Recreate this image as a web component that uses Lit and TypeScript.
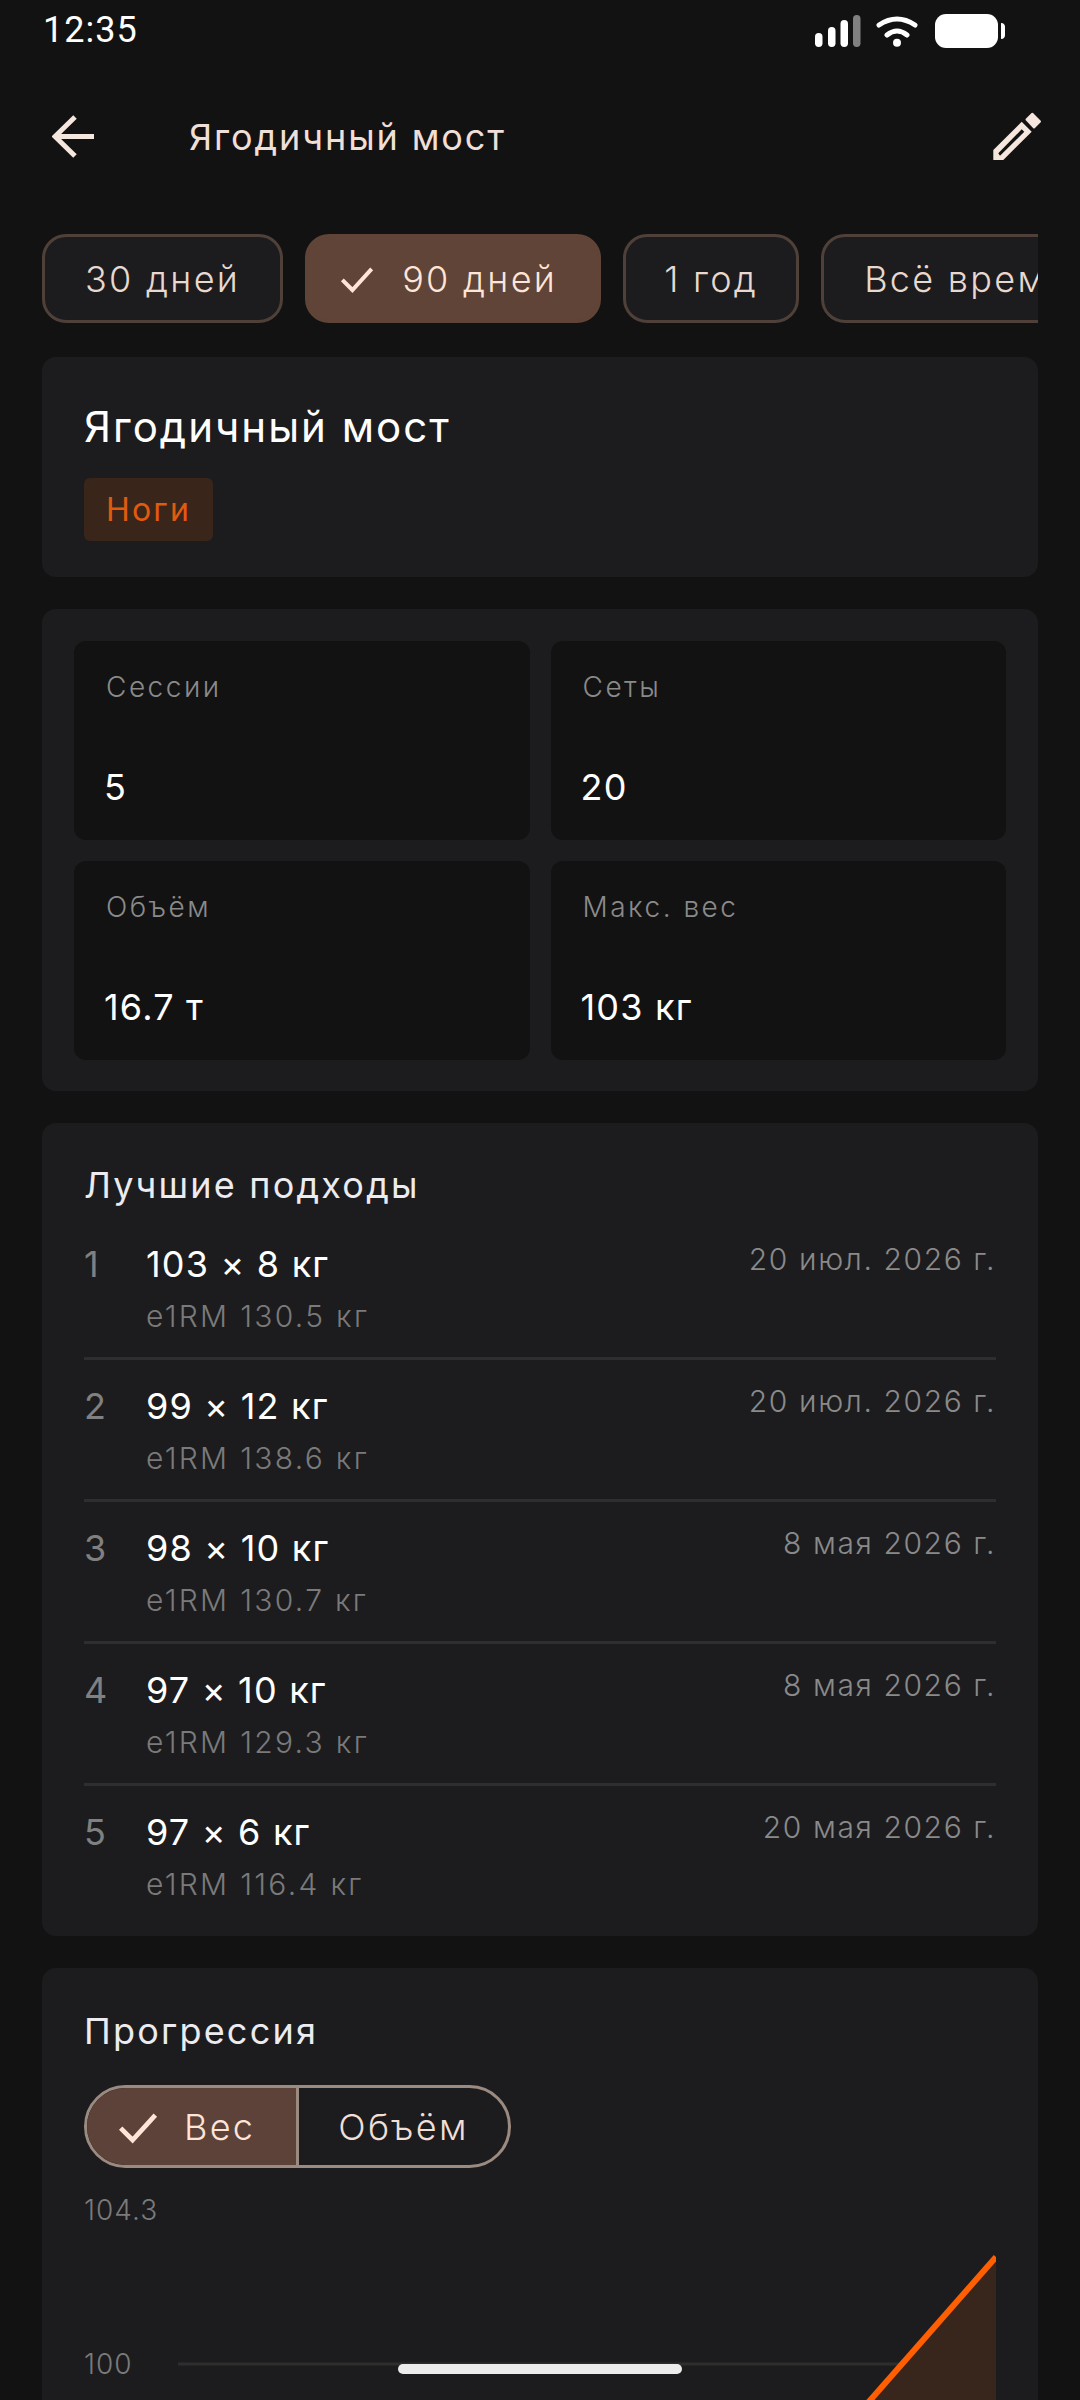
import { LitElement, css, html, svg } from 'lit';
import { customElement } from 'lit/decorators.js';

const checkIcon = (size: number) => html`<svg class="check" width=${size} height=${size} viewBox="0 0 24 24">
  <path d="M4 12.5l5.500 5.500L20 6.500" fill="none" stroke="currentColor" stroke-width="2.200" />
</svg>`;

interface Stat {
  label: string;
  value: string;
}

interface BestSet {
  main: string;
  e1rm: string;
  date: string;
}

const stats: Stat[] = [
  { label: 'Сессии', value: '5' },
  { label: 'Сеты', value: '20' },
  { label: 'Объём', value: '16.7 т' },
  { label: 'Макс. вес', value: '103 кг' },
];

const bestSets: BestSet[] = [
  { main: '103 × 8 кг', e1rm: 'e1RM 130.5 кг', date: '20 июл. 2026 г.' },
  { main: '99 × 12 кг', e1rm: 'e1RM 138.6 кг', date: '20 июл. 2026 г.' },
  { main: '98 × 10 кг', e1rm: 'e1RM 130.7 кг', date: '8 мая 2026 г.' },
  { main: '97 × 10 кг', e1rm: 'e1RM 129.3 кг', date: '8 мая 2026 г.' },
  { main: '97 × 6 кг', e1rm: 'e1RM 116.4 кг', date: '20 мая 2026 г.' },
];

@customElement('app-root')
export class AppRoot extends LitElement {
  private renderStatusBar() {
    return html`<div class="status">
      <span class="time">12:35</span>
      <svg width="190" height="34" viewBox="0 0 190 34">
        <rect x="0" y="19" width="7.500" height="14" rx="3.700" fill="#fff" />
        <rect x="13" y="13" width="7.500" height="20" rx="3.700" fill="#fff" />
        <rect x="25.500" y="6" width="7.500" height="27" rx="3.700" fill="#fff" />
        <rect x="38" y="1" width="7.500" height="32" rx="3.700" fill="#808080" />
        <path d="M64 11Q82-1 100 11M72 21Q82 13 92 21" fill="none" stroke="#fff" stroke-width="5" stroke-linecap="round" />
        <circle cx="82" cy="28.700" r="4" fill="#fff" />
        <rect x="120" y="0" width="63" height="34" rx="11" fill="#fff" />
        <path d="M186 9c3 0 4 2 4 4v8c0 2-1 4-4 4z" fill="#fff" />
      </svg>
    </div>`;
  }

  private renderHeader() {
    return html`<div class="header">
      <svg width="44" height="44" viewBox="0 0 44 44">
        <path d="M42 21.500H4M23 2L3 21.500 23 41" fill="none" stroke="#f5e6de" stroke-width="5" />
      </svg>
      <span class="header-title">Ягодичный мост</span>
      <svg width="50" height="50" viewBox="0 0 50 50">
        <path fill-rule="evenodd" d="M1.300 38L29.700 9.700 39.700 19.700 11.300 48H1.300zM6.300 41.300L8 43.700 32.300 19.700 29.700 17.300z" fill="#f5e6de" />
        <path d="M34.500 7.500L40.300 1.700 48 9.500 42 15.500z" fill="#f5e6de" stroke="#f5e6de" stroke-width="2" stroke-linejoin="round" />
      </svg>
    </div>`;
  }

  private renderChips() {
    return html`<div class="chips">
      <div class="chip">30 дней</div>
      <div class="chip on">${checkIcon(44)}<span>90 дней</span></div>
      <div class="chip narrow">1 год</div>
      <div class="chip">Всё время</div>
    </div>`;
  }

  private renderChart() {
    return html`<svg class="chart" width="912" height="215" viewBox="0 0 912 215">
      ${svg`<line x1="94" y1="174" x2="912" y2="174" stroke="#2e2e2e" stroke-width="3" />
      <text class="axis" x="0" y="30">104.3</text>
      <text class="axis" x="0" y="184">100</text>
      <path d="M912 67L782 215H912z" fill="#38251c" />
      <path d="M912 67L782 215" fill="none" stroke="#ff5f00" stroke-width="6" />`}
    </svg>`;
  }

  protected render() {
    return html`<div class="page">
      ${this.renderStatusBar()}
      ${this.renderHeader()}
      ${this.renderChips()}
      <div class="content">
        <section class="card info">
          <h1>Ягодичный мост</h1>
          <span class="badge">Ноги</span>
        </section>
        <section class="card stats">
          ${stats.map(
            (s) => html`<div class="stat">
              <div class="stat-label">${s.label}</div>
              <div class="stat-value">${s.value}</div>
            </div>`,
          )}
        </section>
        <section class="card best">
          <h2>Лучшие подходы</h2>
          ${bestSets.map(
            (b, i) => html`<div class="row">
              <span class="num">${i + 1}</span>
              <div class="grow">
                <div class="main">${b.main}</div>
                <div class="sub">${b.e1rm}</div>
              </div>
              <span class="date">${b.date}</span>
            </div>`,
          )}
        </section>
        <section class="card progress">
          <h2>Прогрессия</h2>
          <div class="toggle">
            <div class="seg on">${checkIcon(52)}<span>Вес</span></div>
            <div class="seg">Объём</div>
          </div>
          ${this.renderChart()}
        </section>
      </div>
      <div class="home"></div>
    </div>`;
  }

  static styles = css`
    :host {
      display: block;
      font-family: Inter, 'Noto Sans', sans-serif;
      color: #fff;
    }

    .page {
      position: relative;
      box-sizing: border-box;
      width: 1080px;
      height: 2400px;
      overflow: hidden;
      background: #121212;
    }

    .status {
      display: flex;
      align-items: center;
      height: 60px;
      padding: 0 75px 0 43px;
    }

    .status svg {
      margin-top: 2px;
    }

    .time {
      flex: 1;
      font-family: Roboto, sans-serif;
      font-size: 36px;
      letter-spacing: 1px;
    }

    .header {
      display: flex;
      align-items: center;
      height: 150px;
      margin-top: 2px;
      padding: 0 38px 0 52px;
    }

    .header-title {
      flex: 1;
      margin-left: 93px;
      font-size: 36px;
      letter-spacing: 1.9px;
      color: #f0dfd6;
    }

    .chips {
      display: flex;
      gap: 22px;
      margin: 22px 42px 0;
      height: 89px;
      overflow: hidden;
    }

    .chip {
      box-sizing: border-box;
      display: flex;
      flex: none;
      align-items: center;
      height: 89px;
      padding: 0 40px;
      border: 3px solid #4f4039;
      border-radius: 24px;
      background: #1c1c1e;
      color: #e8d8ce;
      font-size: 36px;
      font-weight: 300;
      letter-spacing: 2.300px;
      white-space: nowrap;
    }

    .chip.narrow {
      padding: 0 38px;
    }

    .chip.on {
      gap: 23px;
      padding: 0 41px 0 27px;
      background: #604437;
      border-color: #604437;
      color: #ffe4d8;
    }

    .content {
      display: flex;
      flex-direction: column;
      gap: 32px;
      margin: 34px 42px 0;
    }

    .card {
      box-sizing: border-box;
      border-radius: 14px;
      background: #1c1c1e;
    }

    h1,
    h2 {
      margin: 0;
      font-weight: 400;
    }

    .info {
      height: 220px;
      padding: 44px 42px 0;
    }

    .info h1 {
      font-size: 42px;
      line-height: 52px;
      letter-spacing: 2px;
    }

    .badge {
      display: inline-block;
      margin-top: 25px;
      padding: 0 22px;
      height: 63px;
      line-height: 63px;
      border-radius: 6px;
      background: #3a251b;
      color: #e05a10;
      font-size: 32px;
      letter-spacing: 2.200px;
    }

    .stats {
      display: grid;
      grid-template-columns: 1fr 1fr;
      gap: 21px;
      padding: 32px 32px 31px;
    }

    .stat {
      height: 199px;
      padding: 28px 33px 0 32px;
      box-sizing: border-box;
      border-radius: 12px;
      background: #121212;
    }

    .stat-label {
      font-size: 28px;
      font-weight: 300;
      line-height: 36px;
      letter-spacing: 2.500px;
      color: #8a8a8a;
    }

    .stat-value {
      margin-top: 57px;
      margin-left: -2px;
      font-size: 36px;
      line-height: 50px;
      letter-spacing: 1.200px;
    }

    .best {
      padding: 40px 42px 0;
      height: 813px;
    }

    .best h2,
    .progress h2 {
      font-size: 36px;
      line-height: 44px;
      letter-spacing: 2.200px;
      color: #ebebf0;
    }

    .row {
      display: flex;
      box-sizing: border-box;
      height: 142px;
      padding-top: 21px;
      border-bottom: 3px solid #2e2e30;
    }

    .row:last-child {
      border-bottom: 0;
    }

    .best h2 + .row {
      height: 153px;
      padding-top: 32px;
    }

    .num {
      width: 62px;
      font-size: 36px;
      line-height: 50px;
      color: #808080;
    }

    .grow {
      flex: 1;
    }

    .main {
      font-size: 36px;
      line-height: 50px;
      letter-spacing: 1.200px;
    }

    .sub {
      margin-top: 5px;
      font-size: 30px;
      font-weight: 300;
      line-height: 44px;
      letter-spacing: 2.300px;
      color: #7a7a7a;
    }

    .date {
      font-size: 30px;
      font-weight: 300;
      line-height: 40px;
      letter-spacing: 1.600px;
      color: #8a8a8a;
    }

    .progress {
      padding: 41px 42px 0;
      height: 600px;
    }

    .toggle {
      display: flex;
      box-sizing: border-box;
      width: 427px;
      height: 83px;
      margin-top: 32px;
      border: 3px solid #9b8a80;
      border-radius: 42px;
      overflow: hidden;
      font-size: 36px;
      font-weight: 300;
      letter-spacing: 2.300px;
      color: #f0dfd6;
    }

    .seg {
      display: flex;
      flex: 1;
      align-items: center;
      justify-content: center;
    }

    .seg.on {
      flex: none;
      justify-content: flex-start;
      width: 212px;
      gap: 20px;
      padding-left: 25px;
      background: #5c4238;
      border-right: 3px solid #9b8a80;
      box-sizing: border-box;
      color: #ffe4d8;
    }

    .chart {
      display: block;
      margin-top: 22px;
    }

    .axis {
      fill: #7a7a7a;
      font-size: 28px;
      font-weight: 300;
      letter-spacing: 1px;
    }

    .home {
      position: absolute;
      left: 398px;
      top: 2364px;
      width: 284px;
      height: 10px;
      border-radius: 5px;
      background: #ececec;
    }
  `;
}

declare global {
  interface HTMLElementTagNameMap {
    'app-root': AppRoot;
  }
}
